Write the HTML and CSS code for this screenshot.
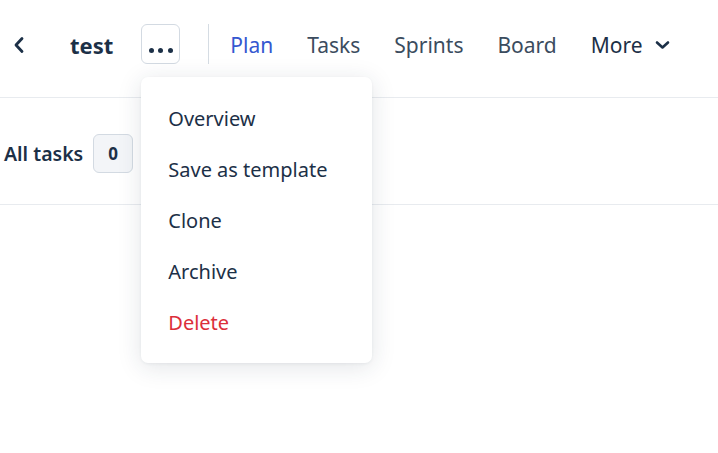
FILE: index.html
```html
<!DOCTYPE html>
<html>
<head>
<meta charset="utf-8">
<link rel="stylesheet" href="styles.css">
</head>
<body>
<div class="page">
  <header class="topbar">
    <button class="back" aria-label="Back">
      <svg width="14" height="18" viewBox="0 0 14 18"><path d="M10 2.5 L4 9 L10 15.5" fill="none" stroke="#1c3047" stroke-width="2.8" stroke-linecap="round" stroke-linejoin="round"/></svg>
    </button>
    <h1 class="title">test</h1>
    <div class="menu-wrap">
      <button class="dots" aria-label="More actions">
        <span class="dot"></span><span class="dot"></span><span class="dot"></span>
      </button>
      <div class="dropdown">
        <div class="item">Overview</div>
        <div class="item">Save as template</div>
        <div class="item">Clone</div>
        <div class="item">Archive</div>
        <div class="item danger">Delete</div>
      </div>
    </div>
    <span class="divider"></span>
    <nav class="tabs">
      <a class="tab active">Plan</a>
      <a class="tab">Tasks</a>
      <a class="tab">Sprints</a>
      <a class="tab">Board</a>
      <a class="tab more">More
        <svg width="15" height="10" viewBox="0 0 15 10"><path d="M2 2.5 L7.5 7.5 L13 2.5" fill="none" stroke="#1c3047" stroke-width="2.6" stroke-linecap="round" stroke-linejoin="round"/></svg>
      </a>
    </nav>
  </header>
  <section class="toolbar">
    <span class="label">All tasks</span>
    <span class="count">0</span>
  </section>
</div>
</body>
</html>
```
FILE: styles.css
```css
* { box-sizing: border-box; }
html, body { margin: 0; padding: 0; background: #fff; }
body {
  font-family: "Noto Sans", "Open Sans", sans-serif;
  color: #1c3047;
  width: 718px;
  height: 453px;
  overflow: hidden;
}
.topbar {
  display: flex;
  align-items: center;
  height: 98px;
  border-bottom: 1px solid #e8ebef;
  padding-left: 7px;
  padding-bottom: 10px;
}
.back {
  border: 0;
  background: none;
  padding: 0;
  width: 24px;
  height: 24px;
  display: flex;
  align-items: center;
  justify-content: center;
  position: relative;
  top: 1px;
}
.title {
  margin: 0 0 0 39px;
  font-size: 22px;
  font-weight: 700;
  line-height: 1;
  position: relative;
  top: 1px;
}
.menu-wrap {
  position: relative;
  margin-left: 28px;
}
.dots {
  width: 39px;
  height: 40px;
  border: 1px solid #d3dae2;
  border-radius: 6px;
  background: #fff;
  display: flex;
  align-items: center;
  justify-content: center;
  gap: 4.5px;
  padding: 0;
}
.dot {
  width: 5px;
  height: 5px;
  border-radius: 50%;
  background: #1c3047;
  position: relative;
  top: 6.5px;
}
.dropdown {
  position: absolute;
  left: 0;
  top: 53px;
  width: 231px;
  padding: 16px 0 15px;
  background: #fff;
  border-radius: 7px;
  box-shadow: 0 4px 24px rgba(30, 45, 70, 0.13), 0 1px 3px rgba(30, 45, 70, 0.06);
  z-index: 10;
}
.item {
  height: 51px;
  line-height: 51px;
  padding-left: 27px;
  font-size: 20px;
  color: #1c3047;
}
.item.danger { color: #dc2f3a; }
.divider {
  width: 1px;
  height: 40px;
  background: #d5dce3;
  margin-left: 28px;
}
.tabs {
  display: flex;
  align-items: center;
  margin-left: 4px;
  position: relative;
  top: 1px;
}
.tab {
  font-size: 21px;
  color: #3b4c5e;
  padding: 0 17px;
  display: flex;
  align-items: center;
  gap: 12px;
}
.tab.active { color: #3557d0; }
.tab.more { color: #1c3047; }
.toolbar {
  display: flex;
  align-items: center;
  height: 107px;
  border-bottom: 1px solid #e8ebef;
  padding-left: 4px;
  padding-top: 4px;
}
.label {
  font-size: 19.5px;
  font-weight: 600;
  color: #1c3047;
}
.count {
  margin-left: 10px;
  width: 40px;
  height: 39px;
  border: 1px solid #d3dae2;
  border-radius: 6px;
  background: #f3f5f8;
  display: flex;
  align-items: center;
  justify-content: center;
  font-size: 17px;
  font-weight: 700;
}
```
